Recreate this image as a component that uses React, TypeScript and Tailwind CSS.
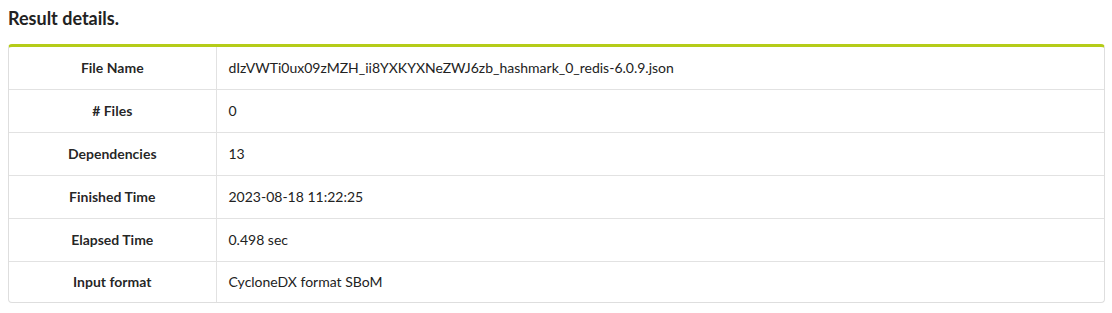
import React from 'react';

const rows: [string, string][] = [
  ['File Name', 'dIzVWTi0ux09zMZH_ii8YXKYXNeZWJ6zb_hashmark_0_redis-6.0.9.json'],
  ['# Files', '0'],
  ['Dependencies', '13'],
  ['Finished Time', '2023-08-18 11:22:25'],
  ['Elapsed Time', '0.498 sec'],
  ['Input format', 'CycloneDX format SBoM'],
];

const App: React.FC = () => {
  return (
    <div className="px-2 pt-[6px] font-['Lato','Liberation_Sans',sans-serif] text-[14px] text-[rgba(0,0,0,0.87)] bg-white">
      <h3 className="text-[18px] leading-[24px] font-bold text-[#222] mb-[14px]">Result details.</h3>

      <div className="w-[1097px] border border-[#dedede] border-t-[3px] border-t-[#b5cc18] rounded-[4px] overflow-hidden">
        <table className="w-full border-collapse">
          <tbody>
            {rows.map(([label, value], i) => {
              const h = i === 0 ? 'h-[42px]' : i === rows.length - 1 ? 'h-[41px]' : 'h-[43px]';
              return (
                <tr key={i} className={i > 0 ? 'border-t border-[#e2e2e2]' : ''}>
                  <td className={`w-[207px] ${h} text-center font-bold border-r border-[#e2e2e2] px-3`}>
                    {label}
                  </td>
                  <td className={`${h} px-3 text-[#222]`}>{value}</td>
                </tr>
              );
            })}
          </tbody>
        </table>
      </div>
    </div>
  );
};

export default App;
